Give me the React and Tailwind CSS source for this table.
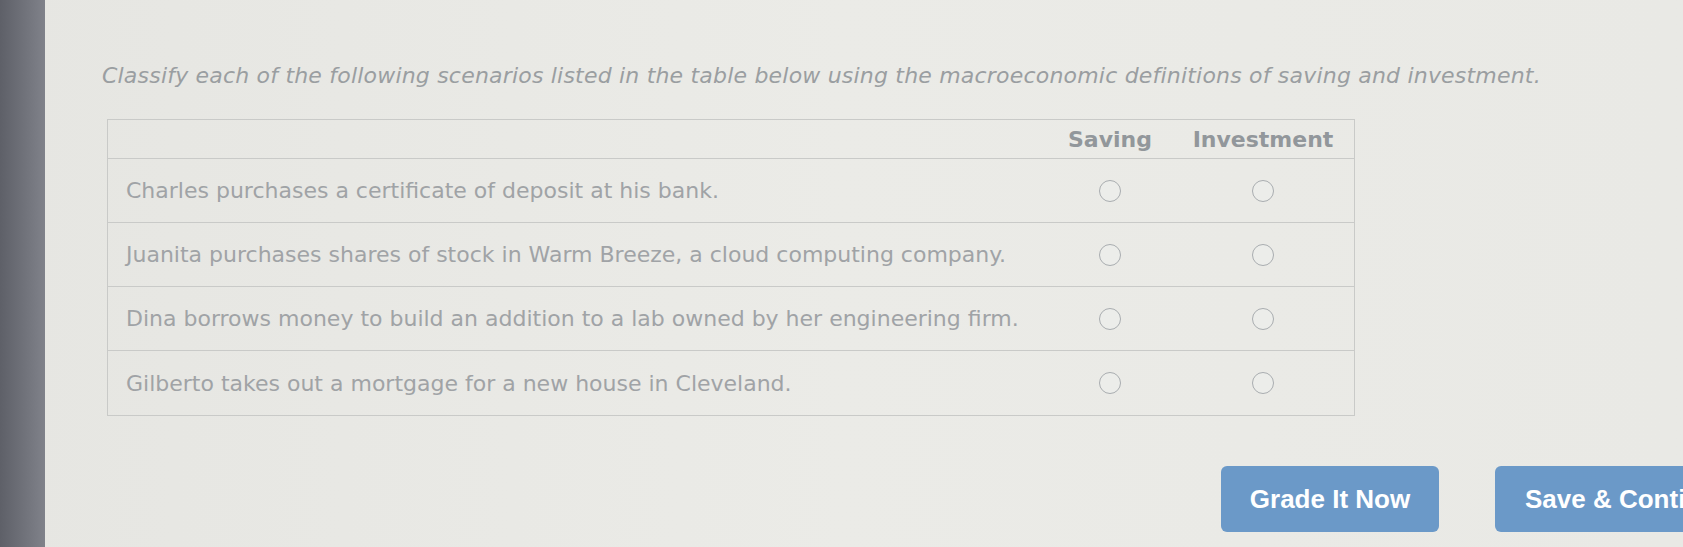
import React from "react";

const rows = [
  "Charles purchases a certificate of deposit at his bank.",
  "Juanita purchases shares of stock in Warm Breeze, a cloud computing company.",
  "Dina borrows money to build an addition to a lab owned by her engineering firm.",
  "Gilberto takes out a mortgage for a new house in Cleveland.",
];

const Radio = () => (
  <span className="block w-[22px] h-[22px] rounded-full border-[1.5px] border-[#a9adb0] bg-[#ecedea]" />
);

export default function App() {
  return (
    <div className="w-[1683px] h-[547px] overflow-hidden flex bg-gradient-to-r from-[#e6e6e2] via-[#ebebe7] to-[#e9e9e5]">
      {/* screen bezel edge */}
      <div className="w-[45px] shrink-0 bg-gradient-to-r from-[#5e6068] to-[#80828a]" />

      <div className="flex-1 pl-[57px] pt-[62px] font-['DejaVu_Sans',Verdana,sans-serif]">
        <p className="italic text-[22px] leading-[28px] text-[#9a9ea1] tracking-[0.2px] whitespace-nowrap">
          Classify each of the following scenarios listed in the table below using the macroeconomic definitions of saving and investment.
        </p>

        {/* TABLE */}
        <div className="mt-[29px] ml-[5px] w-[1248px] border border-[#c9cac8]">
          <div className="flex h-[39px] items-center border-b border-[#c9cac8] text-[22px] font-bold text-[#92979b]">
            <div className="w-[940px]" />
            <div className="w-[124px] text-center">Saving</div>
            <div className="flex-1 text-center">Investment</div>
          </div>
          {rows.map((text, i) => (
            <div
              key={i}
              className={`flex h-[64px] items-center text-[22px] text-[#a0a3a6] ${i < rows.length - 1 ? "border-b border-[#c9cac8]" : ""}`}
            >
              <div className="w-[940px] pl-[18px] whitespace-nowrap">{text}</div>
              <div className="w-[124px] flex justify-center">
                <Radio />
              </div>
              <div className="flex-1 flex justify-center">
                <Radio />
              </div>
            </div>
          ))}
        </div>

        {/* BUTTONS */}
        <div className="mt-[50px] flex gap-[56px] pl-[1119px] font-['Liberation_Sans',Arial,sans-serif]">
          <button className="w-[218px] h-[66px] shrink-0 rounded-[6px] bg-[#6b99c8] text-white font-bold text-[26px]">
            Grade It Now
          </button>
          <button className="w-[250px] h-[66px] shrink-0 rounded-[6px] bg-[#6b99c8] text-white font-bold text-[26px] text-left pl-[30px]">
            Save &amp; Continue
          </button>
        </div>
      </div>
    </div>
  );
}
